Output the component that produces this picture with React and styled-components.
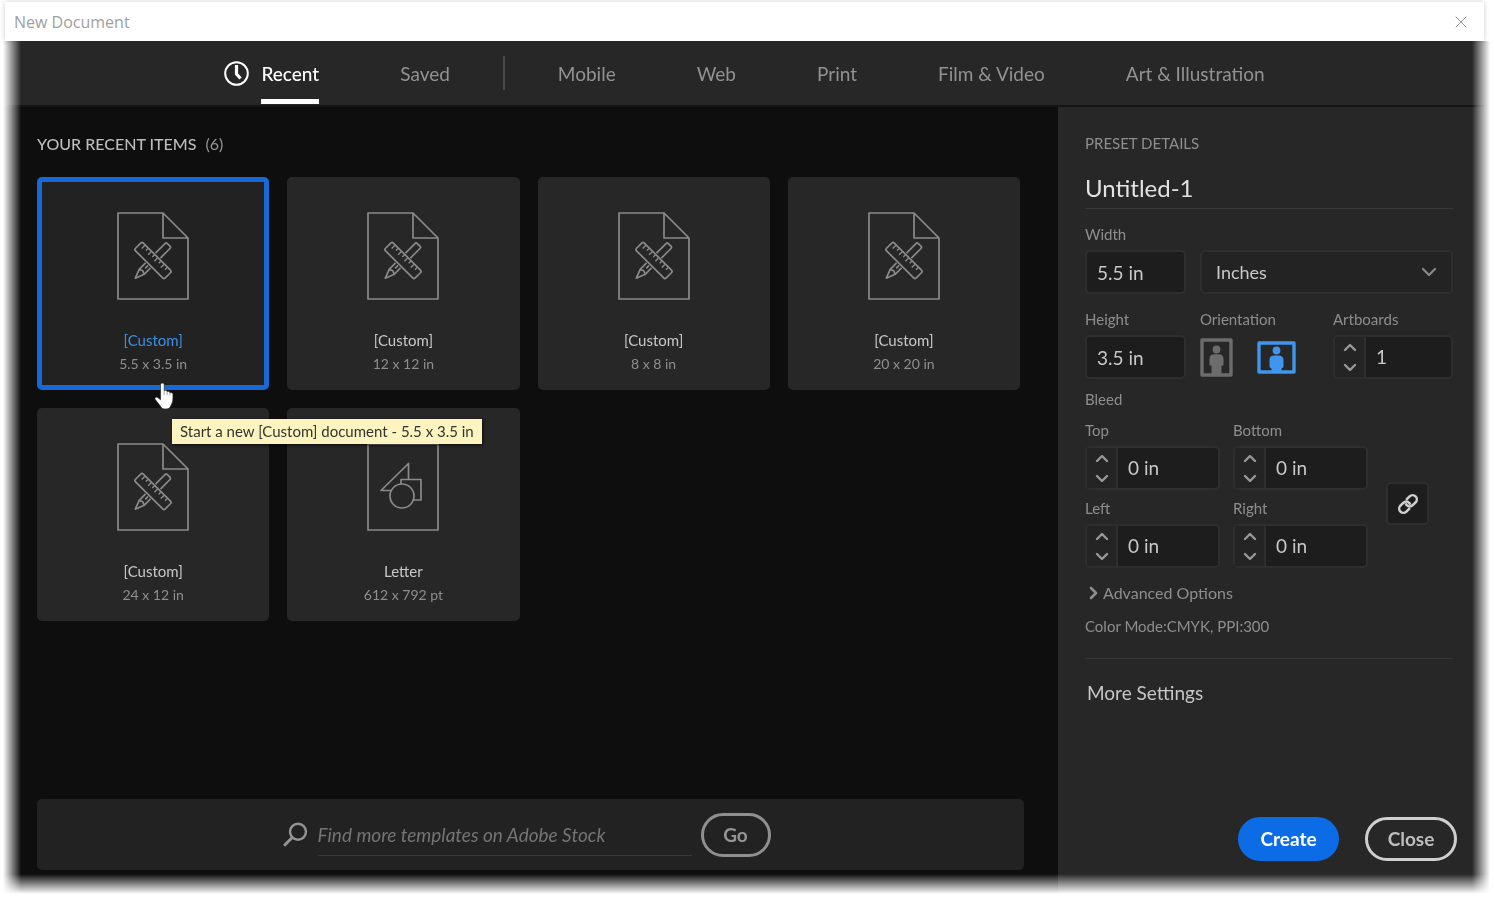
import React, { useState } from 'react';
import styled, { createGlobalStyle, css } from 'styled-components';

const GlobalStyle = createGlobalStyle`
  *, *::before, *::after { box-sizing: border-box; }
  body { margin: 0; background: #fff; }
  button, input, select { font: inherit; color: inherit; margin: 0; }
  button { cursor: pointer; }
`;

const Page = styled.div`
  min-height: 100vh;
  display: flex;
  flex-direction: column;
  padding: 2px 5px 3px 3px;
  font-family: Lato, "Open Sans", sans-serif;
`;

const TitleBar = styled.header`
  position: relative;
  display: flex;
  align-items: center;
  justify-content: space-between;
  height: 39px;
  margin: 0 6px 0 2px;
  padding: 0 16px 0 9px;
  background: #fff;
  box-shadow: 0 0 5px rgba(0, 0, 0, 0.2);
  color: #a0a0a0;
  font: 16px/24px "Open Sans", "Noto Sans", sans-serif;
`;

const TitleClose = styled.button`
  display: flex;
  padding: 0;
  border: 0;
  background: none;
  color: #9a9a9a;
`;

const Body = styled.div`
  flex: 1;
  display: flex;
  flex-direction: column;
  background: #0e0e0e;
  mask-image:
    linear-gradient(to right, transparent, #000 18px, #000 calc(100% - 18px), transparent),
    linear-gradient(to top, transparent, #000 20px);
  mask-composite: intersect;
`;

const Tabs = styled.nav`
  display: flex;
  justify-content: center;
  align-items: center;
  gap: 81px;
  height: 66px;
  padding-right: 4px;
  background: #272727;
  border-bottom: 2px solid #141414;
`;

const Tab = styled.button`
  display: flex;
  align-items: center;
  gap: 12px;
  height: 62px;
  padding: 1px 0 0;
  border: 0;
  background: none;
  font-size: 19px;
  line-height: 24px;
  white-space: nowrap;
  color: ${(p) => (p.$active ? '#fff' : '#929292')};
  font-weight: ${(p) => (p.$active ? 500 : 400)};
`;

const TabLabel = styled.span`
  display: flex;
  align-items: center;
  align-self: stretch;
  box-shadow: inset 0 -5px 0 #fff;
`;

const TabDivider = styled.span`
  width: 2px;
  height: 34px;
  margin: 0 -28px;
  background: #4a4a4a;
`;

const Content = styled.div`
  flex: 1;
  display: flex;
`;

const Main = styled.main`
  flex: 1;
  display: flex;
  flex-direction: column;
  min-width: 0;
  padding: 25px 34px 24px;
`;

const Heading = styled.h2`
  display: flex;
  gap: 9px;
  margin: 0 0 21px;
  font-size: 16px;
  line-height: 24px;
  font-weight: 500;
  color: #bdbdbd;
`;

const Count = styled.span`
  color: #959595;
  font-weight: 400;
`;

const CardGrid = styled.div`
  display: grid;
  grid-template-columns: repeat(4, 1fr);
  gap: 18px;
  margin-right: 4px;
`;

const CardSlot = styled.div`
  position: relative;
`;

const Card = styled.button`
  display: flex;
  flex-direction: column;
  align-items: center;
  width: 100%;
  height: 213px;
  padding: 30px 0 0;
  border: 5px solid ${(p) => (p.$selected ? '#176ad6' : 'transparent')};
  border-radius: 5px;
  background: ${(p) => (p.$selected ? '#222' : '#272727')};
  background-clip: border-box;
  color: #8a8a8a;
`;

const CardName = styled.span`
  margin-top: 28px;
  font-size: 15px;
  line-height: 24px;
  color: ${(p) => (p.$selected ? '#3d8fe6' : '#c8c8c8')};
`;

const CardSize = styled.span`
  font-size: 14px;
  line-height: 23px;
  color: #8e8e8e;
`;

const Pointer = styled.span`
  position: absolute;
  z-index: 2;
  left: 50%;
  top: 205px;
  display: flex;
`;

const Tooltip = styled.span`
  position: absolute;
  z-index: 2;
  left: 135px;
  top: 242px;
  padding: 0 8px 1px;
  background: #fdf4c0;
  box-shadow: 1px 1px 3px rgba(0, 0, 0, 0.7);
  color: #333;
  font-size: 15px;
  line-height: 24px;
  white-space: nowrap;
`;

const SearchBar = styled.form`
  display: flex;
  align-items: center;
  justify-content: center;
  height: 71px;
  margin-top: auto;
  padding-right: 8px;
  border-radius: 5px;
  background: #222;
  color: #959595;
`;

const SearchInput = styled.input`
  width: 374px;
  height: 43px;
  margin: 0 9px 0 10px;
  padding: 0;
  border: 0;
  border-bottom: 1px solid #383838;
  border-radius: 0;
  background: none;
  outline: none;
  font-size: 19px;
  &::placeholder { color: #747474; font-style: italic; opacity: 1; }
`;

const Pill = styled.button`
  min-width: ${(p) => p.$width}px;
  height: 44px;
  padding: 0 0 1px;
  border: 3px solid ${(p) => p.$border};
  border-radius: 22px;
  background: ${(p) => p.$fill || 'transparent'};
  color: ${(p) => p.$color};
  font-size: 19px;
  font-weight: 700;
`;

const Panel = styled.aside`
  display: flex;
  flex-direction: column;
  flex: none;
  width: 432px;
  padding: 24px 33px 33px 27px;
  background: #272727;
  color: #8e8e8e;
  font-size: 15px;
  line-height: 24px;
`;

const PanelTitle = styled.h2`
  margin: 0;
  font-size: 15px;
  line-height: 24px;
  font-weight: 400;
`;

const Fields = styled.div`
  display: flex;
  flex-direction: column;
  margin-right: 4px;
`;

const NameInput = styled.input`
  width: 100%;
  height: 41px;
  margin: 13px 0;
  padding: 0 0 2px;
  border: 0;
  border-bottom: 1px solid #383838;
  border-radius: 0;
  background: none;
  outline: none;
  color: #e2e2e2;
  font-size: 24px;
`;

const SizeGrid = styled.div`
  display: grid;
  grid-template-columns: 101px 1fr 120px;
  gap: 13px 14px;
  margin-bottom: 8px;
`;

const Field = styled.div`
  display: flex;
  flex-direction: column;
  justify-content: flex-end;
  grid-column: ${(p) => p.$span || 'auto'};
`;

const Label = styled.label`
  height: 24px;
  margin-bottom: 4px;
`;

const GroupLabel = styled.span`
  height: 24px;
  margin-bottom: 7px;
`;

const boxed = css`
  border: 2px solid #2e2e2e;
  border-radius: 5px;
  background: #1d1d1d;
`;

const TextBox = styled.input`
  ${boxed}
  width: 100%;
  height: 44px;
  padding: 0 10px;
  outline: none;
  color: #c8c8c8;
  font-size: 19px;
`;

const SelectWrap = styled.div`
  position: relative;
  display: flex;
  align-items: center;
  color: #858585;
  svg { position: absolute; right: 16px; pointer-events: none; }
`;

const Select = styled.select`
  ${boxed}
  width: 100%;
  height: 44px;
  padding: 0 14px 1px;
  background: #232323;
  appearance: none;
  outline: none;
  color: #c8c8c8;
  font-size: 18px;
`;

const Stepper = styled.div`
  ${boxed}
  display: flex;
  height: 44px;
  overflow: hidden;
`;

const StepButtons = styled.div`
  display: flex;
  flex-direction: column;
  flex: none;
  width: 31px;
  background: #242424;
  border-right: 2px solid #2e2e2e;
`;

const StepButton = styled.button`
  flex: 1;
  display: flex;
  align-items: center;
  justify-content: center;
  padding: 0;
  border: 0;
  background: none;
  color: #999;
`;

const StepInput = styled.input`
  flex: 1;
  width: 0;
  padding: 0 0 0 10px;
  border: 0;
  background: none;
  outline: none;
  color: #c8c8c8;
  font-size: 19px;
`;

const Orientations = styled.div`
  display: flex;
  align-items: center;
  gap: 24px;
  height: 44px;
`;

const OrientationButton = styled.button`
  display: flex;
  padding: 0;
  border: 0;
  background: none;
  color: ${(p) => (p.$active ? '#3f96ee' : '#6c6c6c')};
`;

const BleedRow = styled.div`
  display: flex;
  align-items: center;
  gap: 18px;
`;

const BleedGrid = styled.div`
  display: grid;
  grid-template-columns: 135px 135px;
  gap: 6px 13px;
`;

const LinkButton = styled.button`
  ${boxed}
  display: flex;
  align-items: center;
  justify-content: center;
  width: 43px;
  height: 43px;
  margin-top: 21px;
  padding: 0;
  color: #d0d0d0;
`;

const Advanced = styled.button`
  display: flex;
  align-items: center;
  gap: 5px;
  align-self: flex-start;
  margin: 13px 0 9px;
  padding: 0 0 0 4px;
  border: 0;
  background: none;
  font-size: 16px;
  line-height: 24px;
`;

const Summary = styled.div`
  padding-bottom: 20px;
  border-bottom: 1px solid #363636;
`;

const MoreSettings = styled.button`
  align-self: flex-start;
  margin: 22px 0 0 2px;
  padding: 0;
  border: 0;
  background: none;
  color: #c6c6c6;
  font-size: 19px;
  line-height: 24px;
`;

const Actions = styled.div`
  display: flex;
  justify-content: flex-end;
  gap: 26px;
  margin-top: auto;
`;

const Chevron = ({ d, w, h, sw = 2 }) => (
  <svg width={w} height={h} viewBox={`0 0 ${w} ${h}`} fill="none" stroke="currentColor" strokeWidth={sw} strokeLinecap="round" strokeLinejoin="round" aria-hidden="true">
    <path d={d} />
  </svg>
);

const ClockIcon = () => (
  <svg width="25" height="25" viewBox="0 0 25 25" fill="none" stroke="currentColor" aria-hidden="true">
    <circle cx="12.5" cy="12.5" r="11.3" strokeWidth="2" />
    <path d="M12.5 4V13l4 4.5" strokeWidth="3.2" />
  </svg>
);

const DocumentIcon = ({ kind }) => (
  <svg width="72" height="88" viewBox="0 0 72 88" fill="none" stroke="currentColor" strokeWidth="1.7" strokeLinejoin="round" aria-hidden="true">
    {kind === 'custom' ? (
      <>
        <path d="M1 1h45l25 25v61H1zM46 1v25h25" />
        <g transform="translate(36 48.5) rotate(45)">
          <rect x="-21" y="-5.5" width="42" height="11" rx="1.8" />
          <path strokeWidth="1.4" d="M-16.5-5v4.5M-12-5v3M-7.5-5v4.5M-3-5v3M1.5-5v4.5M6-5v3M10.5-5v4.5M15-5v3" />
        </g>
        <g transform="translate(36 48.500) rotate(-45)">
          <path d="M7-3.5h13.500a1.6 1.6 0 0 1 1.6 1.6v3.8a1.6 1.6 0 0 1-1.6 1.6H7" />
          <path d="M-7-3.5h-9l-9 3.5 9 3.5h9M-16-3.5l1.500 3.500-1.500 3.500M-7 0h-4" />
        </g>
      </>
    ) : (
      <>
        <rect x="1" y="1" width="70" height="86" />
        <circle cx="35" cy="53" r="12" />
        <path d="M24.500 47.500H14L41.500 20.500V36.500M34 41v-4.500h20V57h-7.500" />
      </>
    )}
  </svg>
);

const HandIcon = () => (
  <svg width="22" height="28" viewBox="0 0 20 26" fill="#fff" stroke="#222" strokeWidth="0.6" aria-hidden="true">
    <path d="M8.500 1c1.200 0 1.700.8 1.700 1.800v5.200c1.300-.6 2.500 0 2.700.9 1.200-.6 2.400 0 2.600 1 1.300-.5 2.800.2 2.800 1.600 0 4.500.2 6.600-1.500 9.500-.9 2.500-2 4-4.300 4H10c-1.800 0-2.600-1.200-3.400-2.600L1.700 16c-.8-1.300 1-2.600 2.400-1.600l2.700 2V2.800c0-1 .6-1.800 1.700-1.800z" />
    <path d="M10.200 8v4M12.900 9v3.200M15.500 10V12.500" fill="none" stroke="#777" />
  </svg>
);

const SearchIcon = () => (
  <svg width="25" height="25" viewBox="0 0 25 25" fill="none" stroke="currentColor" strokeWidth="2.4" strokeLinecap="round" aria-hidden="true">
    <circle cx="15" cy="9.800" r="8" />
    <path d="M9 15.800l-7 7" strokeWidth="3" />
  </svg>
);

const PortraitIcon = () => (
  <svg width="33" height="39" viewBox="0 0 33 39" fill="currentColor" aria-hidden="true">
    <rect x="2" y="2" width="29" height="35" fill="none" stroke="currentColor" strokeWidth="3.4" strokeLinejoin="round" />
    <circle cx="16.500" cy="11.500" r="3.900" />
    <path d="M9.500 21c0-3 1.700-4.700 4.500-4.700h5c2.800 0 4.500 1.700 4.500 4.700v6.500h-2V37h-10v-9.500h-2z" />
  </svg>
);

const LandscapeIcon = () => (
  <svg width="39" height="33" viewBox="0 0 39 33" fill="currentColor" aria-hidden="true">
    <rect x="2" y="2" width="35" height="29" fill="none" stroke="currentColor" strokeWidth="3.4" strokeLinejoin="round" />
    <circle cx="19.500" cy="9.500" r="3.900" />
    <path d="M12.500 19c0-3 1.700-4.500 4.500-4.500h5c2.800 0 4.500 1.500 4.500 4.500v6c0 1.500-1 2-2 2.500V30h-10v-2.500c-1-.5-2-1-2-2.500z" />
  </svg>
);

const LinkIcon = () => (
  <svg width="24" height="24" viewBox="0 0 24 24" fill="none" stroke="currentColor" strokeWidth="2.5" strokeLinecap="butt" aria-hidden="true">
    <g transform="translate(12 12) rotate(-45)">
      <path d="M-1.500 4.200H-6.500a4.200 4.200 0 0 1 0-8.400h4a4.200 4.200 0 0 1 4.200 4.200a4.200 4.200 0 0 1-.7 2.200" />
      <path d="M1.500-4.200H6.500a4.200 4.200 0 0 1 0 8.400H2.500A4.200 4.200 0 0 1-1.700 0a4.200 4.200 0 0 1 .7-2.200" />
    </g>
  </svg>
);

const UP = 'M2 7l5-5 5 5';
const DOWN = 'M2 2l5 5 5-5';

const NumberStepper = ({ id, value }) => (
  <Stepper>
    <StepButtons>
      <StepButton type="button" aria-label="Increase"><Chevron d={UP} w={14} h={9} sw={2.4} /></StepButton>
      <StepButton type="button" aria-label="Decrease"><Chevron d={DOWN} w={14} h={9} sw={2.4} /></StepButton>
    </StepButtons>
    <StepInput id={id} defaultValue={value} />
  </Stepper>
);

const presets = [
  { name: '[Custom]', size: '5.5 x 3.5 in', kind: 'custom' },
  { name: '[Custom]', size: '12 x 12 in', kind: 'custom' },
  { name: '[Custom]', size: '8 x 8 in', kind: 'custom' },
  { name: '[Custom]', size: '20 x 20 in', kind: 'custom' },
  { name: '[Custom]', size: '24 x 12 in', kind: 'custom' },
  { name: 'Letter', size: '612 x 792 pt', kind: 'letter' },
];

const bleeds = ['Top', 'Bottom', 'Left', 'Right'];

export default function App() {
  const [selected, setSelected] = useState(0);
  return (
    <Page>
      <GlobalStyle />
      <TitleBar>
        New Document
        <TitleClose type="button" aria-label="Close window">
          <Chevron d="M2 1l10 10M12 1L2 11" w={14} h={12} sw={1} />
        </TitleClose>
      </TitleBar>
      <Body>
        <Tabs>
          <Tab $active type="button"><ClockIcon /><TabLabel>Recent</TabLabel></Tab>
          <Tab type="button">Saved</Tab>
          <TabDivider />
          <Tab type="button">Mobile</Tab>
          <Tab type="button">Web</Tab>
          <Tab type="button">Print</Tab>
          <Tab type="button">Film &amp; Video</Tab>
          <Tab type="button">Art &amp; Illustration</Tab>
        </Tabs>
        <Content>
          <Main>
            <Heading>YOUR RECENT ITEMS <Count>(6)</Count></Heading>
            <CardGrid>
              {presets.map((p, i) => (
                <CardSlot key={i}>
                  <Card type="button" $selected={i === selected} onClick={() => setSelected(i)}>
                    <DocumentIcon kind={p.kind} />
                    <CardName $selected={i === selected}>{p.name}</CardName>
                    <CardSize>{p.size}</CardSize>
                  </Card>
                  {i === selected && (
                    <>
                      <Pointer><HandIcon /></Pointer>
                      <Tooltip role="tooltip">Start a new {p.name} document - {p.size}</Tooltip>
                    </>
                  )}
                </CardSlot>
              ))}
            </CardGrid>
            <SearchBar onSubmit={(e) => e.preventDefault()}>
              <SearchIcon />
              <SearchInput aria-label="Find more templates" placeholder="Find more templates on Adobe Stock" />
              <Pill type="submit" $width={70} $border="#8f8f8f" $color="#959595">Go</Pill>
            </SearchBar>
          </Main>
          <Panel>
            <Fields>
              <PanelTitle>PRESET DETAILS</PanelTitle>
              <NameInput aria-label="Document name" defaultValue="Untitled-1" />
              <SizeGrid>
                <Field>
                  <Label htmlFor="width">Width</Label>
                  <TextBox id="width" defaultValue="5.5 in" />
                </Field>
                <Field $span="2 / 4">
                  <SelectWrap>
                    <Select id="units" aria-label="Units"><option>Inches</option></Select>
                    <Chevron d="M2 2l6 6 6-6" w={16} h={10} sw={2.4} />
                  </SelectWrap>
                </Field>
                <Field>
                  <Label htmlFor="height">Height</Label>
                  <TextBox id="height" defaultValue="3.5 in" />
                </Field>
                <Field>
                  <Label as="span">Orientation</Label>
                  <Orientations>
                    <OrientationButton type="button" aria-label="Portrait"><PortraitIcon /></OrientationButton>
                    <OrientationButton type="button" aria-label="Landscape" $active><LandscapeIcon /></OrientationButton>
                  </Orientations>
                </Field>
                <Field>
                  <Label htmlFor="artboards">Artboards</Label>
                  <NumberStepper id="artboards" value="1" />
                </Field>
              </SizeGrid>
              <GroupLabel>Bleed</GroupLabel>
              <BleedRow>
                <BleedGrid>
                  {bleeds.map((side) => (
                    <Field key={side}>
                      <Label htmlFor={side}>{side}</Label>
                      <NumberStepper id={side} value="0 in" />
                    </Field>
                  ))}
                </BleedGrid>
                <LinkButton type="button" aria-label="Link bleed values"><LinkIcon /></LinkButton>
              </BleedRow>
              <Advanced type="button"><Chevron d="M2 2l5 5-5 5" w={9} h={14} sw={2.6} />Advanced Options</Advanced>
              <Summary>Color Mode:CMYK, PPI:300</Summary>
              <MoreSettings type="button">More Settings</MoreSettings>
            </Fields>
            <Actions>
              <Pill type="button" $width={101} $border="#0b6ce6" $fill="#0b6ce6" $color="#fff">Create</Pill>
              <Pill type="button" $width={92} $border="#cfcfcf" $color="#bdbdbd">Close</Pill>
            </Actions>
          </Panel>
        </Content>
      </Body>
    </Page>
  );
}
